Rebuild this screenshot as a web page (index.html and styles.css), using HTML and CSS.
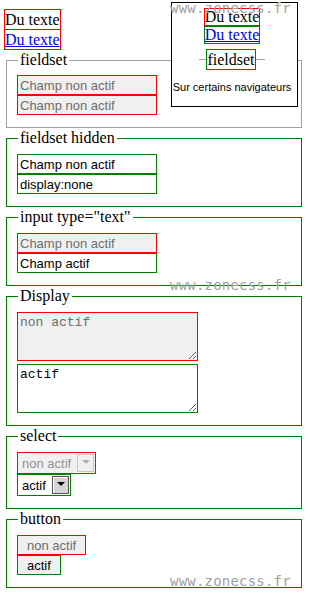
FILE: index.html
```html
<!DOCTYPE html>
<html lang="fr">
<head>
    <meta charset="UTF-8">
    <meta name="viewport" content="width=device-width, initial-scale=1.0">
    <title>fieldset disabled</title>
    <link rel="stylesheet" href="styles.css">
</head>
<body>
    <div class="demo-texte">
        <span class="ligne">Du texte</span>
        <a href="#" class="ligne-lien">Du texte</a>
    </div>

    <div class="note">
        <span class="note-texte">Du texte</span>
        <a href="#" class="note-lien">Du texte</a>
        <div class="note-fieldset"><span class="note-legend">fieldset</span></div>
        <p class="note-info">Sur certains navigateurs</p>
    </div>

    <fieldset class="bloc gris" disabled>
        <legend>fieldset</legend>
        <div class="pile">
            <input type="text" class="champ rouge" value="Champ non actif" disabled>
            <input type="text" class="champ rouge" value="Champ non actif" disabled>
        </div>
    </fieldset>

    <fieldset class="bloc">
        <legend>fieldset hidden</legend>
        <div class="pile">
            <input type="text" class="champ vert" value="Champ non actif">
            <input type="text" class="champ vert" value="display:none">
        </div>
    </fieldset>

    <fieldset class="bloc">
        <legend>input type="text"</legend>
        <div class="pile">
            <input type="text" class="champ rouge" value="Champ non actif" disabled>
            <input type="text" class="champ vert" value="Champ actif">
        </div>
    </fieldset>

    <fieldset class="bloc">
        <legend>Display</legend>
        <div class="pile espace">
            <textarea class="zone rouge" disabled>non actif</textarea>
            <textarea class="zone vert">actif</textarea>
        </div>
    </fieldset>

    <fieldset class="bloc">
        <legend>select</legend>
        <div class="pile">
            <div class="liste rouge inactive">
                <select disabled><option>non actif</option></select>
                <span class="fleche"></span>
            </div>
            <div class="liste vert">
                <select><option>actif</option></select>
                <span class="fleche"></span>
            </div>
        </div>
    </fieldset>

    <fieldset class="bloc">
        <legend>button</legend>
        <div class="pile">
            <button class="bouton rouge" disabled>non actif</button>
            <button class="bouton vert">actif</button>
        </div>
    </fieldset>

    <!-- filigrane du site -->
    <span class="filigrane haut">www.zonecss.fr</span>
    <span class="filigrane milieu">www.zonecss.fr</span>
    <span class="filigrane bas">www.zonecss.fr</span>
</body>
</html>
```

FILE: styles.css
```css
body {
    margin: 0;
    padding: 9px 0 0 0;
    font-family: "Liberation Serif", "Times New Roman", serif;
    font-size: 16px;
    color: #000;
    background: #fff;
}
.demo-texte {
    display: flex;
    flex-direction: column;
    width: fit-content;
    margin-left: 4px;
    border: 1px solid red;
    line-height: 19px;
}
.demo-texte .ligne {
    border-bottom: 1px solid red;
}
.ligne-lien {
    color: #0000ee;
}

/* encadre en haut a droite */
.note {
    position: absolute;
    left: 171px;
    top: 2px;
    width: 127px;
    height: 105px;
    box-sizing: border-box;
    border: 1px solid #000;
    background: #fff;
    padding: 5px 5px 0 0;
    display: flex;
    flex-direction: column;
    align-items: center;
    z-index: 2;
}
.note-texte, .note-lien {
    display: block;
    line-height: 16px;
}
.note-texte {
    border: 1px solid red;
}
.note-lien {
    border: 1px solid green;
    color: #0000ee;
}
.note-fieldset {
    display: flex;
    align-items: center;
    margin-top: 5px;
}
.note-fieldset::before, .note-fieldset::after {
    content: "";
    height: 1px;
    background: #a0a0a0;
}
.note-fieldset::before {
    width: 7px;
}
.note-fieldset::after {
    width: 9px;
}
.note-legend {
    border: 1px solid green;
    line-height: 19px;
}
.note-info {
    margin: 11px 0 0;
    white-space: nowrap;
    font-family: "Liberation Sans", Arial, sans-serif;
    font-size: 11px;
    line-height: 13px;
}

/* fieldsets */
.bloc {
    margin: 1px 8px 0 6px;
    padding: 7px 10px 12px;
    border: 1px solid green;
    min-width: 0;
}
.bloc.gris {
    padding-top: 6px;
    border-color: #a0a0a0;
}
.bloc legend {
    margin-left: 1px;
    padding: 0 2px;
    line-height: 18px;
}
.pile {
    display: flex;
    flex-direction: column;
    align-items: flex-start;
}
.pile.espace {
    gap: 3px;
}
.rouge {
    border: 1px solid red;
}
.vert {
    border: 1px solid green;
}

.champ {
    box-sizing: border-box;
    width: 140px;
    height: 20px;
    margin: 0;
    padding: 0 2px;
    font-family: "Liberation Sans", Arial, sans-serif;
    font-size: 13px;
    color: #000;
    background: #fff;
    outline: none;
}
.champ:disabled, .zone:disabled {
    color: #6d6d6d;
    background: #f0f0f0;
}

.zone {
    box-sizing: border-box;
    width: 181px;
    height: 49px;
    margin: 0;
    padding: 2px;
    font-family: "Liberation Mono", "Courier New", monospace;
    font-size: 13px;
    color: #000;
    background: #fff;
    resize: vertical;
}

.liste {
    display: inline-flex;
    box-sizing: border-box;
    height: 22px;
    background: #fff;
}
.liste select {
    appearance: none;
    -webkit-appearance: none;
    border: none;
    margin: 0;
    padding: 0 6px 0 4px;
    font-family: "Liberation Sans", Arial, sans-serif;
    font-size: 13px;
    color: #000;
    background: transparent;
    outline: none;
}
.liste.inactive {
    background: #f0f0f0;
}
.liste.inactive select {
    color: #6d6d6d;
    padding-right: 5px;
}
.fleche {
    width: 17px;
    margin: 1px 1px 1px 0;
    box-sizing: border-box;
    border: 1px solid #555;
    box-shadow: inset 1px 1px #fff;
    background: #d4d4d4;
    display: flex;
    align-items: center;
    justify-content: center;
}
.fleche::after {
    content: "";
    border-left: 4px solid transparent;
    border-right: 4px solid transparent;
    border-top: 4px solid #000;
    margin-top: -2px;
}
.inactive .fleche {
    border-color: #c8c8c8;
    box-shadow: none;
    background: #f0f0f0;
}
.inactive .fleche::after {
    border-top-color: #b0b0b0;
}

.bouton {
    box-sizing: border-box;
    height: 20px;
    margin: 0;
    padding: 0 9px;
    font-family: "Liberation Sans", Arial, sans-serif;
    font-size: 13px;
    color: #000;
    background: #f0f0f0;
}
.bouton:disabled {
    color: #6d6d6d;
}

.filigrane {
    position: absolute;
    left: 170px;
    font-family: "DejaVu Sans Mono", monospace;
    font-size: 14px;
    line-height: 14px;
    letter-spacing: 0.2px;
    color: #a0a0a0;
    z-index: 3;
}
.filigrane.haut {
    top: 1px;
}
.filigrane.milieu {
    top: 278px;
}
.filigrane.bas {
    top: 574px;
}
```
